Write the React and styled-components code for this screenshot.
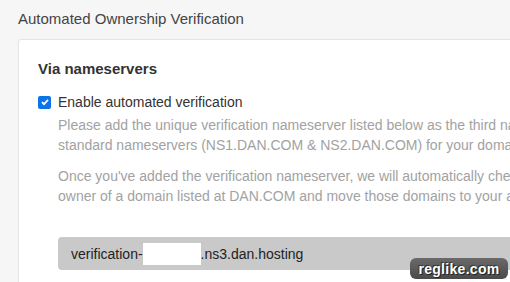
import React from "react";
import styled, { createGlobalStyle } from "styled-components";

const GlobalStyle = createGlobalStyle`
  html, body {
    margin: 0;
    padding: 0;
    background: #f6f6f6;
    font-family: Arial, "Liberation Sans", sans-serif;
    overflow: hidden;
  }
`;

const Page = styled.div`
  position: relative;
  width: 510px;
  height: 282px;
  overflow: hidden;
  padding: 11px 0 0 18px;
  box-sizing: border-box;
`;

const Title = styled.h2`
  margin: 0 0 12px;
  font-size: 15px;
  font-weight: 400;
  color: #444;
  line-height: 16px;
`;

const Card = styled.div`
  width: 620px;
  background: #fff;
  border: 1px solid #e4e4e4;
  border-radius: 3px;
  padding: 20px 19px 40px;
`;

const Heading = styled.h3`
  margin: 0 0 15px;
  font-size: 15px;
  font-weight: 700;
  color: #333;
  line-height: 18px;
`;

const CheckRow = styled.label`
  display: flex;
  align-items: center;
  gap: 7px;
  font-size: 14px;
  color: #333;
  line-height: 18px;
`;

const Box = styled.span`
  width: 13px;
  height: 13px;
  border-radius: 2px;
  background: #0a74e8;
  display: flex;
  align-items: center;
  justify-content: center;
`;

const Body = styled.div`
  padding-left: 20px;
  margin-top: 4px;
`;

const Para = styled.p`
  margin: 0 0 11px;
  font-size: 14px;
  line-height: 20px;
  color: #a2a2a2;
  white-space: nowrap;
`;

const Code = styled.div`
  margin-top: 31px;
  height: 33px;
  background: #c9c9c9;
  border-radius: 4px;
  display: flex;
  align-items: center;
  padding-left: 13px;
  font-size: 14px;
  color: #222;
`;

const Redact = styled.span`
  display: inline-block;
  width: 58px;
  height: 22px;
  background: #fff;
`;

const Watermark = styled.div`
  position: absolute;
  right: 2px;
  bottom: 3px;
  width: 98px;
  height: 21px;
  border-radius: 6px;
  background: linear-gradient(#6a6a6a, #4a4a4a);
  color: #fff;
  font-weight: 700;
  font-size: 14px;
  display: flex;
  align-items: center;
  justify-content: center;
  letter-spacing: 0.3px;
  text-shadow: 1px 1px 0 #222, -1px -1px 0 #333;
`;

export default function App() {
  return (
    <>
      <GlobalStyle />
      <Page>
        <Title>Automated Ownership Verification</Title>
        <Card>
          <Heading>Via nameservers</Heading>
          <CheckRow>
            <Box>
              <svg width="10" height="10" viewBox="0 0 10 10">
                <path d="M2 5.2l2 2 4-4.4" stroke="#fff" strokeWidth="1.8" fill="none" />
              </svg>
            </Box>
            Enable automated verification
          </CheckRow>
          <Body>
            <Para>
              Please add the unique verification nameserver listed below as the third nameserver next to the
              <br />
              standard nameservers (NS1.DAN.COM &amp; NS2.DAN.COM) for your domains.
            </Para>
            <Para>
              Once you've added the verification nameserver, we will automatically check if you are the
              <br />
              owner of a domain listed at DAN.COM and move those domains to your account.
            </Para>
            <Code>
              verification-<Redact />.ns3.dan.hosting
            </Code>
          </Body>
        </Card>
        <Watermark>reglike.com</Watermark>
      </Page>
    </>
  );
}
